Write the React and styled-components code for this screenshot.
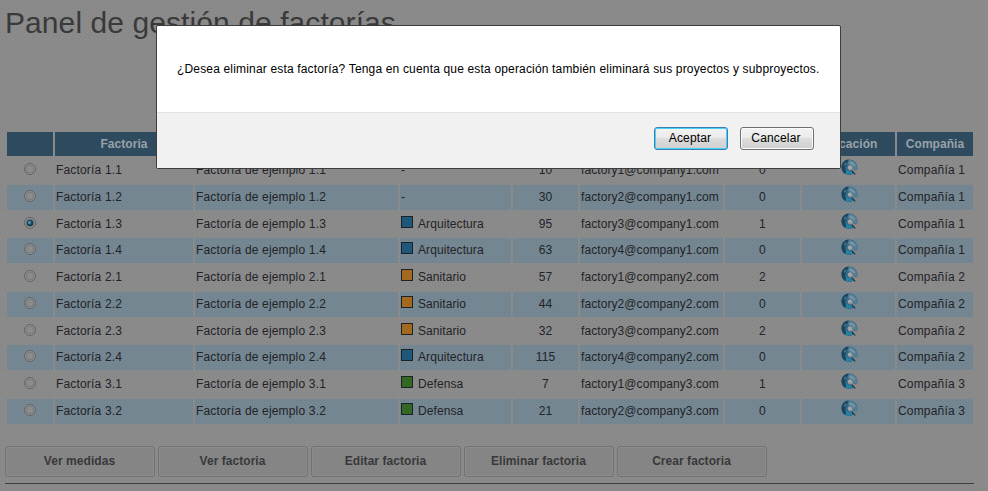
import React from 'react';
import styled, { createGlobalStyle } from 'styled-components';

const Global = createGlobalStyle`
  * { box-sizing: border-box; }
  html, body, #root { height: 100%; }
  body { margin: 0; overflow: hidden; background: #fff; font-family: "Liberation Sans", Arial, sans-serif; }
`;
const Page = styled.div`
  height: 491px; position: relative; overflow: hidden; padding: 5px 14px 0 5px;
  background-color: #8b8b8b; color: #232328;
`;
const Dither = styled.div`
  position: absolute; inset: 0; pointer-events: none; background: rgba(0,0,0,.06);
  mask-image: conic-gradient(from 270deg at 1px 1px, #000 90deg, transparent 0), conic-gradient(from 270deg at 1px 1px, #000 90deg, transparent 0);
  mask-size: 4px 4px; mask-position: 0 0, 2px 2px;
`;
const Title = styled.h1`
  margin: 0; height: 127px; font-size: 30px; line-height: 35px; font-weight: 400;
  letter-spacing: .08px; color: #3a3a3a; white-space: nowrap;
`;
const Table = styled.div`
  display: grid; grid-template-columns: 46px 138px 203px 111px 65px 143px 75px 93px 76px;
  grid-template-rows: 24.2px; grid-auto-rows: 24.75px; gap: 2px; margin-left: 2px; height: 292px;
`;
const Head = styled.div`
  background: #2f4b60; color: #9aa3a9; font-size: 12px; font-weight: 700; letter-spacing: .05px;
  line-height: 24px; text-align: center; white-space: nowrap; overflow: hidden;
`;
const Cell = styled.div`
  background: ${p => (p.$alt ? '#758792' : 'transparent')}; font-size: 12px; letter-spacing: ${p => (p.$tight ? '.08px' : '.17px')};
  line-height: 24px; padding: 0 1px; white-space: nowrap; display: flex; justify-content: ${p => (p.$center ? 'center' : 'flex-start')};
`;
const Radio = styled.svg`width: 12px; height: 12px; margin-top: 5px; display: block;`;
const Swatch = styled.i`
  width: 12px; height: 12px; border: 1px solid #1c2225; background: ${p => p.$c}; margin: 4px 5px 0 0;
`;
const Globe = styled.svg`width: 17px; height: 17px; display: block; margin: 1px 0 0 1px;`;
const Actions = styled.div`
  display: flex; gap: 3px; margin-top: 22px; height: 31px; padding-bottom: 6px;
  border-bottom: 1px solid #3f3f42; box-sizing: content-box;
`;
const Action = styled.button`
  width: 150px; height: 31px; border: 1px solid #717375; border-radius: 3px; background: #868686; color: #39393b;
  box-shadow: inset 0 0 0 1px #8d8d8d;
  font: 700 12px "Liberation Sans", Arial, sans-serif; letter-spacing: .05px; padding: 0 1px 1px 0;
`;
const Dialog = styled.div`
  position: absolute; left: 156px; top: 25px; width: 685px; height: 144px; border: 1px solid #3d3d3d; border-radius: 2px;
  background: #fff; color: #000; display: flex; flex-direction: column;
`;
const Message = styled.div`
  height: 86px; padding: 0 0 0 20px; line-height: 86px; font-size: 12px; letter-spacing: .168px; white-space: nowrap;
`;
const Footer = styled.div`
  flex: 1; background: #f1f1f1; border-top: 1px solid #e1e1e1; display: flex; justify-content: flex-end; gap: 12px; padding: 14px 26px 0 0;
`;
const DialogButton = styled.button`
  width: 74px; height: 23px; border-radius: 3px; border: 1px solid ${p => (p.$focus ? '#3c7fb1' : '#707070')};
  box-shadow: inset 0 0 0 1px ${p => (p.$focus ? '#48d0f8' : '#fbfbfb')};
  background: linear-gradient(#f2f2f2 0%, #ebebeb 48%, #dddddd 50%, #cfcfcf 100%);
  font: 12px "Liberation Sans", Arial, sans-serif; letter-spacing: .17px; color: #000; padding: 0 2px 1px 0;
`;

const ARQ = ['Arquitectura', '#1f587a'];
const SAN = ['Sanitario', '#a36a20'];
const DEF = ['Defensa', '#336825'];
const rows = [
  [1, 1, null, 10, 0], [1, 2, null, 30, 0], [1, 3, ARQ, 95, 1], [1, 4, ARQ, 63, 0],
  [2, 1, SAN, 57, 2], [2, 2, SAN, 44, 0], [2, 3, SAN, 32, 2], [2, 4, ARQ, 115, 0],
  [3, 1, DEF, 7, 1], [3, 2, DEF, 21, 0],
];

function RadioMark({ on }) {
  return (
    <Radio viewBox="0 0 12 12">
      <circle cx="6" cy="6" r="5.5" fill="#949494" stroke="#616568" />
      <circle cx="6" cy="6" r="3.8" fill={on ? '#8a8f92' : '#8d8d8d'} stroke="#717375" strokeWidth=".8" />
      {on && <><circle cx="6" cy="6" r="3.3" fill="#1b4258" /><circle cx="5.5" cy="5.5" r="1.7" fill="#4b8ba5" /></>}
    </Radio>
  );
}
function GlobeIcon() {
  return (
    <Globe viewBox="0 0 17 17">
      <path d="M8.200 .5C3.800 .5 .5 3.900 .5 8.300c0 4.300 3.200 7.700 7.300 7.700 2.200 0 4.100-.6 5.400-1.800L10.600 11c-1 .7-2.400.6-3.300-.4-1.200-1.400-.7-3.600 1.100-4.300 1.900-.6 3.700.5 4 2.400l.3 2.300 3.200.3c.5-1 .7-2.100.6-3.200C16.200 3.800 12.700 .5 8.200 .5Z" fill="#356a86" />
      <path d="M7.500 .5C3.500 .8 .5 4.100 .5 8.300c0 2.900 1.400 5.400 3.700 6.700l1-2.200C3.500 10 4 6.500 6.300 4.500Z" fill="#1c465e" />
      <path d="M8 .9c4.200-.2 7.900 3 8.200 7.400 0 1-.1 1.800-.4 2.600l-3-.3c.3-3-1.500-5.100-4.700-4.800L6.500 4.500Z" fill="#557f96" />
      <path d="M9 2.500c2.500 0 4.600 1.700 5.300 4.200l-1.900.6C11.500 5.800 10.300 5 8.500 5Z" fill="#7898a8" />
      <path d="M5.200 10c1 1.800 2.900 2.700 5.400 2.200l1.500 2c-2.200 1.400-5.200 1.500-7.400.2Z" fill="#2583a5" />
      <path d="M2.500 5.500 4.500 3.200 6 4.200 4 7Z" fill="#41718a" />
      <path d="m11 11 3.600 3.900-.7 1.200-1.500-1.900-1.500-1Z" fill="#29343a" />
      <circle cx="8.900" cy="8.600" r="2" fill="#a0a8ac" />
    </Globe>
  );
}

const heads = ['', 'Factoria', '', '', '', '', '', 'Ubicación', 'Compañia'];

export default function App() {
  return (
    <>
      <Global />
      <Page>
        <Title>Panel de gestión de factorías</Title>
        <Table>
          {heads.map((h, i) => <Head key={i}>{h}</Head>)}
          {rows.map(([c, n, sector, num, projects], i) => {
            const alt = i % 2 === 1;
            return (
              <React.Fragment key={i}>
                <Cell $alt={alt} $center><RadioMark on={i === 2} /></Cell>
                <Cell $alt={alt}>Factoría {c}.{n}</Cell>
                <Cell $alt={alt}>Factoría de ejemplo {c}.{n}</Cell>
                <Cell $alt={alt} $tight>{sector ? <><Swatch $c={sector[1]} />{sector[0]}</> : '-'}</Cell>
                <Cell $alt={alt} $center>{num}</Cell>
                <Cell $alt={alt} $tight>factory{n}@company{c}.com</Cell>
                <Cell $alt={alt} $center>{projects}</Cell>
                <Cell $alt={alt} $center><GlobeIcon /></Cell>
                <Cell $alt={alt}>Compañía {c}</Cell>
              </React.Fragment>
            );
          })}
        </Table>
        <Actions>
          {['Ver medidas', 'Ver factoria', 'Editar factoria', 'Eliminar factoria', 'Crear factoria'].map(t => <Action key={t}>{t}</Action>)}
        </Actions>
        <Dither />
        <Dialog role="dialog">
          <Message>¿Desea eliminar esta factoría? Tenga en cuenta que esta operación también eliminará sus proyectos y subproyectos.</Message>
          <Footer>
            <DialogButton $focus>Aceptar</DialogButton>
            <DialogButton>Cancelar</DialogButton>
          </Footer>
        </Dialog>
      </Page>
    </>
  );
}
